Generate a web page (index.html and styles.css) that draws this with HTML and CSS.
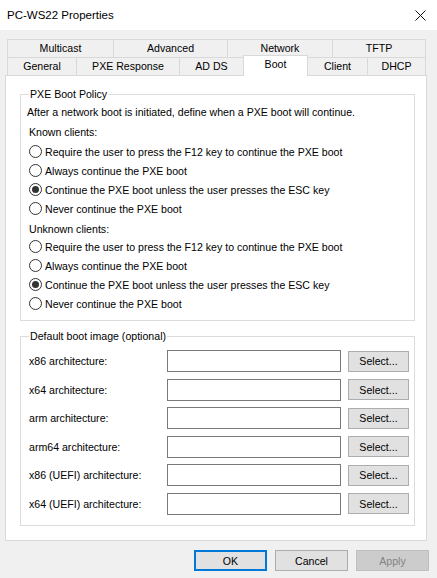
FILE: index.html
```html
<!DOCTYPE html>
<html>
<head>
<meta charset="utf-8">
<link rel="stylesheet" href="styles.css">
</head>
<body>
<div class="window">
  <div class="titlebar">
    <span class="title">PC-WS22 Properties</span>
    <svg class="close" width="11" height="11" viewBox="0 0 11 11"><path d="M0.5 0.5 L10.5 10.5 M10.5 0.5 L0.5 10.5" stroke="#111" stroke-width="1" fill="none"/></svg>
  </div>
  <div class="tabs">
    <div class="tabrow">
      <div class="tab t-multicast">Multicast</div>
      <div class="tab t-advanced">Advanced</div>
      <div class="tab t-network">Network</div>
      <div class="tab t-tftp last">TFTP</div>
    </div>
    <div class="tabrow">
      <div class="tab t-general">General</div>
      <div class="tab t-pxe">PXE Response</div>
      <div class="tab t-adds">AD DS</div>
      <div class="tab t-boot active">Boot</div>
      <div class="tab t-client">Client</div>
      <div class="tab t-dhcp last">DHCP</div>
    </div>
  </div>
  <div class="panel">
    <fieldset class="group policy">
      <legend>PXE Boot Policy</legend>
      <div class="desc">After a network boot is initiated, define when a PXE boot will continue.</div>
      <div class="subhead">Known clients:</div>
      <div class="radios first">
        <div class="radio"><span class="dot"></span>Require the user to press the F12 key to continue the PXE boot</div>
        <div class="radio"><span class="dot"></span>Always continue the PXE boot</div>
        <div class="radio"><span class="dot checked"></span>Continue the PXE boot unless the user presses the ESC key</div>
        <div class="radio"><span class="dot"></span>Never continue the PXE boot</div>
      </div>
      <div class="subhead second">Unknown clients:</div>
      <div class="radios">
        <div class="radio"><span class="dot"></span>Require the user to press the F12 key to continue the PXE boot</div>
        <div class="radio"><span class="dot"></span>Always continue the PXE boot</div>
        <div class="radio"><span class="dot checked"></span>Continue the PXE boot unless the user presses the ESC key</div>
        <div class="radio"><span class="dot"></span>Never continue the PXE boot</div>
      </div>
    </fieldset>
    <fieldset class="group images">
      <legend>Default boot image (optional)</legend>
      <div class="imggrid">
        <div class="lbl">x86 architecture:</div><div class="field"></div><div class="btn sel">Select...</div>
        <div class="lbl">x64 architecture:</div><div class="field"></div><div class="btn sel">Select...</div>
        <div class="lbl">arm architecture:</div><div class="field"></div><div class="btn sel">Select...</div>
        <div class="lbl">arm64 architecture:</div><div class="field"></div><div class="btn sel">Select...</div>
        <div class="lbl">x86 (UEFI) architecture:</div><div class="field"></div><div class="btn sel">Select...</div>
        <div class="lbl">x64 (UEFI) architecture:</div><div class="field"></div><div class="btn sel">Select...</div>
      </div>
    </fieldset>
  </div>
  <div class="buttons">
    <div class="btn dlg ok">OK</div>
    <div class="btn dlg">Cancel</div>
    <div class="btn dlg disabled">Apply</div>
  </div>
</div>
</body>
</html>
```
FILE: styles.css
```css
* { box-sizing: border-box; }
html, body { margin: 0; padding: 0; }
body {
  background: #f0f0f0;
  font-family: "Liberation Sans", Arial, sans-serif;
  font-size: 10.6px;
  color: #000;
}
.window { width: 437px; height: 578px; background: #f0f0f0; overflow: hidden; }
.titlebar {
  height: 30px;
  background: #fff;
  display: flex;
  align-items: center;
  justify-content: space-between;
  padding: 0 11px 0 7px;
}
.title { font-size: 11.5px; line-height: 14px; }
.close { display: block; }

.tabs { margin: 9px 0 0 7px; width: 419px; }
.tabrow { display: flex; height: 18px; }
.tab {
  height: 18px;
  line-height: 17px;
  text-align: center;
  border-top: 1px solid #d9d9d9;
  border-left: 1px solid #d9d9d9;
  background: #f0f0f0;
  white-space: nowrap;
}
.tab.last { border-right: 1px solid #d9d9d9; }
.tab.active {
  position: relative;
  z-index: 2;
  background: #fff;
  height: 21px;
  margin-top: -2px;
  line-height: 16px;
  border-right: 1px solid #d9d9d9;
}
.tab.active + .tab { border-left: none; }
.t-multicast { width: 106px; }
.t-advanced { width: 114px; }
.t-network { width: 105px; }
.t-tftp { width: 94px; }
.t-general { width: 69px; }
.t-pxe { width: 103px; }
.t-adds { width: 64px; }
.t-boot { width: 65px; }
.t-client { width: 59px; }
.t-dhcp { width: 59px; }

.panel {
  margin-left: 5px;
  width: 422px;
  height: 466px;
  background: #fff;
  border: 1px solid #d9d9d9;
  padding-top: 12px;
}
.group {
  margin: 0 0 0 14px;
  width: 395px;
  min-width: 0;
  border: 1px solid #dcdcdc;
  padding: 0 0 7px 8px;
}
.group legend {
  padding: 0 1px;
  line-height: 13px;
}
.desc { line-height: 14px; margin: 4px 0 0 -2px; white-space: nowrap; }
.subhead { line-height: 14px; margin-top: 6px; }
.subhead.second { margin-top: 4px; }
.radios { margin-top: 1px; }
.radios.first { margin-top: 3px; }
.radio {
  display: flex;
  align-items: center;
  height: 19px;
  white-space: nowrap;
}
.dot {
  width: 13px;
  height: 13px;
  border: 1px solid #333;
  border-radius: 50%;
  background: #fff;
  margin-right: 3px;
  display: flex;
  align-items: center;
  justify-content: center;
  flex: none;
}
.dot.checked::after {
  content: "";
  width: 7px;
  height: 7px;
  border-radius: 50%;
  background: #333;
}
.images { margin-top: 9px; padding-bottom: 10px; }
.imggrid {
  display: grid;
  grid-template-columns: 131px 174px 61px;
  column-gap: 7px;
  row-gap: 6.6px;
  grid-auto-rows: 22px;
  margin-top: 7px;
  align-items: center;
}
.lbl { white-space: nowrap; }
.field {
  height: 22px;
  border: 1px solid #7a7a7a;
  background: #fff;
}
.btn {
  background: #e1e1e1;
  border: 1px solid #adadad;
  display: flex;
  align-items: center;
  justify-content: center;
}
.btn.sel { height: 21px; }
.buttons {
  display: flex;
  justify-content: flex-end;
  gap: 8px;
  margin-top: 9px;
  padding-right: 8px;
}
.btn.dlg { width: 73px; height: 21px; }
.btn.ok { border: 2px solid #0078d7; }
.btn.disabled { background: #cccccc; border-color: #bfbfbf; color: #838383; }
```
